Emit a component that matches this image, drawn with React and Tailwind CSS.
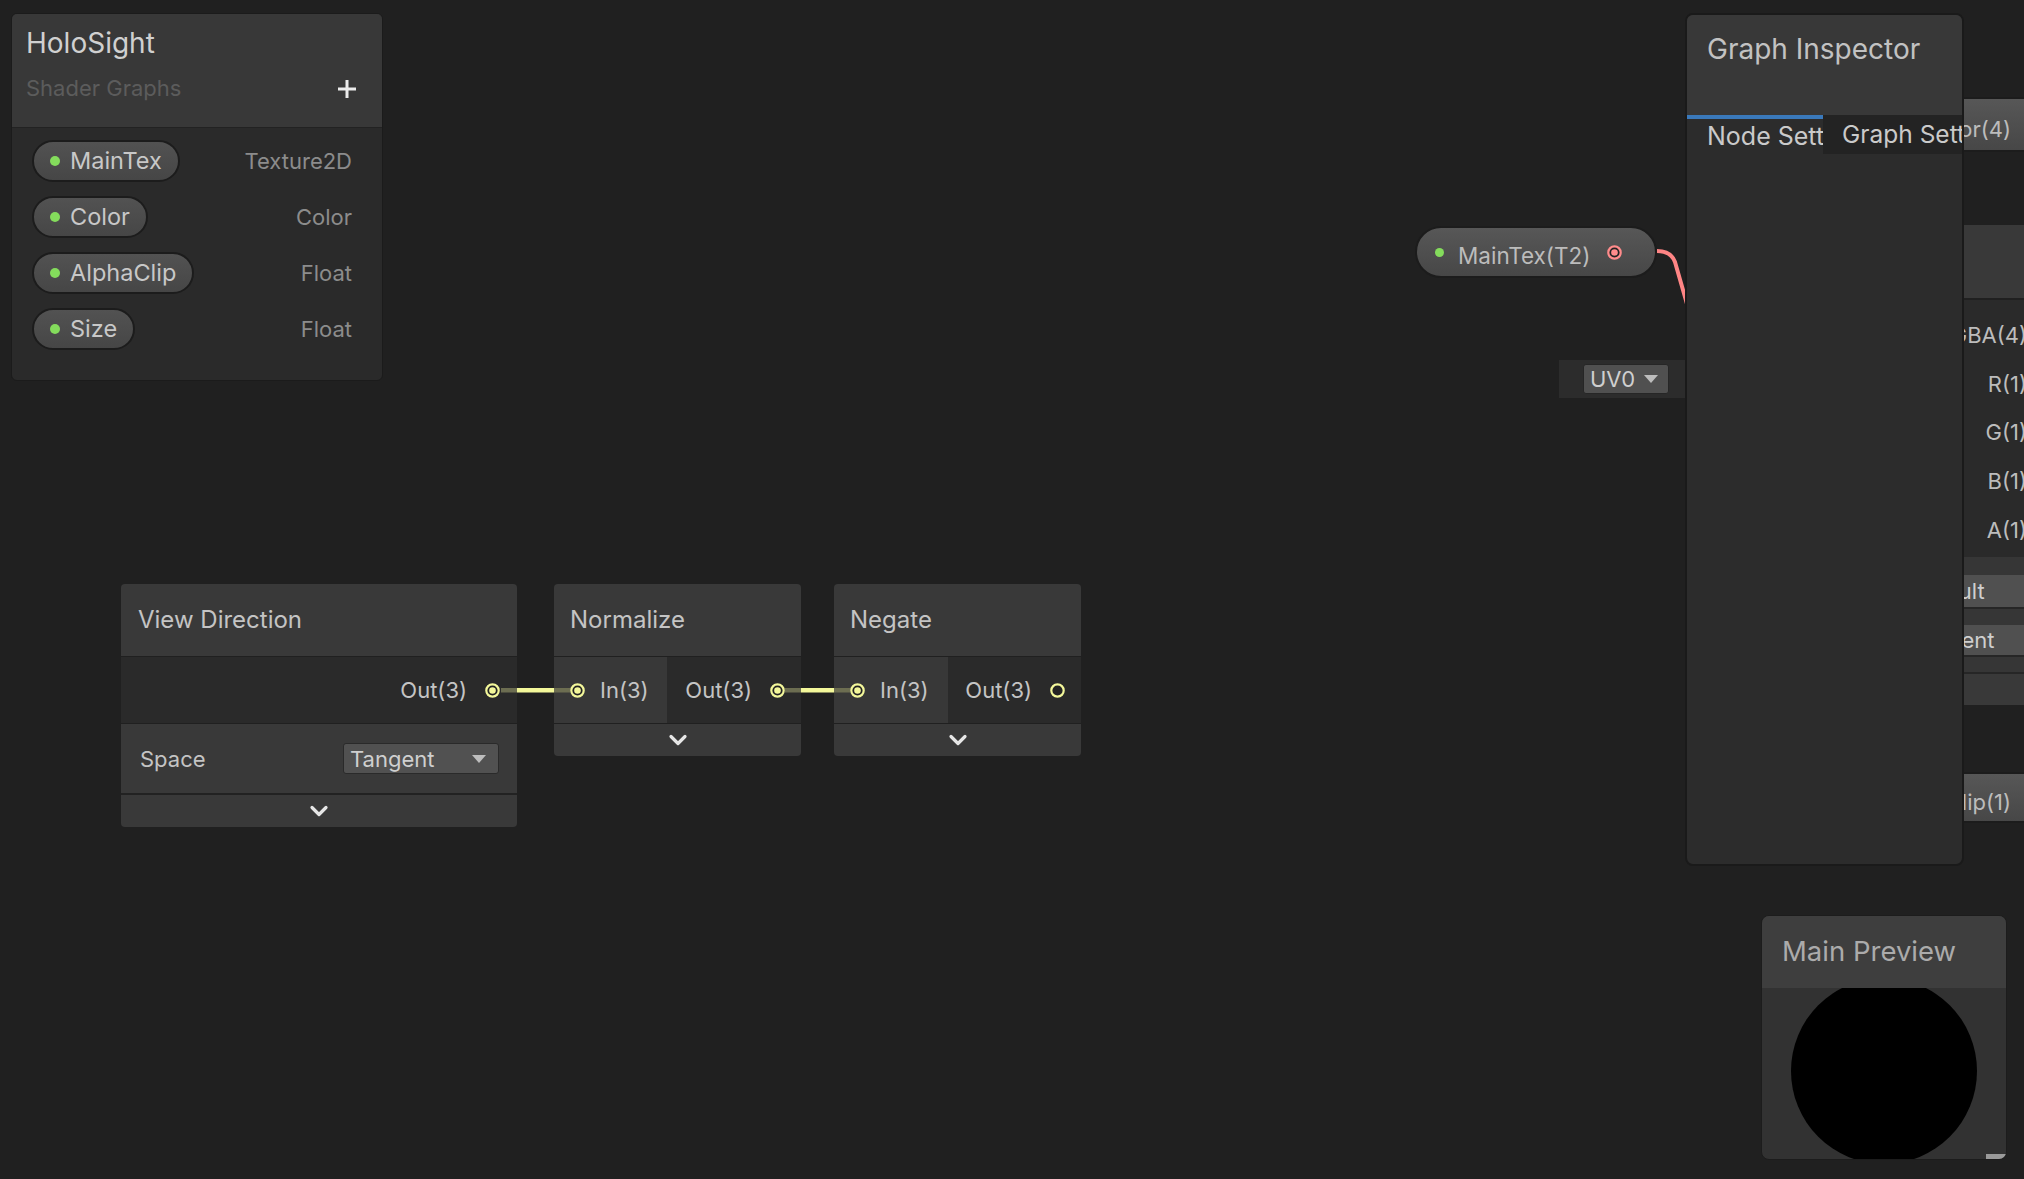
import React from "react";

const YEL = "#F3F79A";
const DIM = "#6c6d51";

function Port({ color = YEL, filled = true }) {
  return (
    <svg width="15" height="15" viewBox="0 0 15 15" className="shrink-0">
      <circle cx="7.5" cy="7.5" r="6.2" fill="#232323" stroke={color} strokeWidth="2.2" />
      {filled && <circle cx="7.5" cy="7.5" r="3.3" fill={color} />}
    </svg>
  );
}

function Chevron() {
  return (
    <svg width="20" height="12" viewBox="0 0 20 12" className="shrink-0">
      <path d="M3 2.5 L10 9.5 L17 2.5" fill="none" stroke="#e6e6e6" strokeWidth="3.2" strokeLinecap="round" strokeLinejoin="round" />
    </svg>
  );
}

function DropArrow() {
  return (
    <svg width="14" height="8" viewBox="0 0 14 8" className="shrink-0">
      <path d="M0 0 H14 L7 8 Z" fill="#bdbdbd" />
    </svg>
  );
}

function PlusIcon() {
  return (
    <svg width="20" height="20" viewBox="0 0 20 20" className="shrink-0">
      <path d="M10 1 V19 M1 10 H19" stroke="#ececec" strokeWidth="3" />
    </svg>
  );
}

function BbRow({ name, type }) {
  return (
    <div className="flex items-center justify-between">
      <div className="h-[42px] rounded-full border-2 border-[#1c1c1c] bg-linear-to-b from-[#525252] to-[#464646] flex items-center pl-[16px] pr-[16px] gap-[10px]">
        <span className="w-[10px] h-[10px] rounded-full bg-[#84dc5c]" />
        <span className="text-[23.5px] leading-none text-[#c8c8c8]">{name}</span>
      </div>
      <span className="text-[22px] leading-none text-[#8c8c8c]">{type}</span>
    </div>
  );
}

function Blackboard() {
  return (
    <div className="absolute left-[11px] top-[13px] w-[372px] h-[368px] rounded-[6px] border border-[#1b1b1b] bg-[#2a2a2a] overflow-hidden flex flex-col">
      <div className="h-[114px] shrink-0 bg-[#383838] border-b border-[#222222] pl-[14px] pr-[25px] pt-[15px] flex flex-col">
        <div className="text-[28px] leading-[28px] text-[#d0d0d0]">HoloSight</div>
        <div className="mt-[20px] flex items-center justify-between">
          <span className="text-[22px] leading-[23px] text-[#5c5c5c]">Shader Graphs</span>
          <PlusIcon />
        </div>
      </div>
      <div className="flex flex-col gap-[14px] pt-[12px] pl-[20px] pr-[30px]">
        <BbRow name="MainTex" type="Texture2D" />
        <BbRow name="Color" type="Color" />
        <BbRow name="AlphaClip" type="Float" />
        <BbRow name="Size" type="Float" />
      </div>
    </div>
  );
}

function ViewDirectionNode() {
  return (
    <div className="absolute left-[121px] top-[584px] w-[396px] flex flex-col rounded-[4px] overflow-hidden">
      <div className="h-[72px] bg-[#393939] flex items-center pl-[17px] text-[24px] text-[#c4c4c4]">View Direction</div>
      <div className="h-[1px] bg-[#202020]" />
      <div className="h-[66px] bg-[#2a2a2a] flex items-center justify-end pr-[17px] gap-[18px]">
        <span className="text-[22px] leading-none text-[#c4c4c4]">Out(3)</span>
        <Port />
      </div>
      <div className="h-[1px] bg-[#202020]" />
      <div className="h-[69px] bg-[#393939] flex items-center justify-between pl-[19px] pr-[18px]">
        <span className="text-[22px] leading-none text-[#c4c4c4]">Space</span>
        <div className="w-[156px] h-[31px] rounded-[3px] bg-[#515151] border border-[#2a2a2a] flex items-center justify-between pl-[6px] pr-[12px]">
          <span className="text-[22px] leading-none text-[#cfcfcf]">Tangent</span>
          <DropArrow />
        </div>
      </div>
      <div className="h-[2px] bg-[#222222]" />
      <div className="h-[32px] bg-[#393939] flex items-center justify-center">
        <Chevron />
      </div>
    </div>
  );
}

function SmallNode({ left, title, inWidth, outFilled }) {
  return (
    <div className="absolute top-[584px] w-[247px] flex flex-col rounded-[4px] overflow-hidden" style={{ left }}>
      <div className="h-[72px] bg-[#393939] flex items-center pl-[16px] text-[24px] text-[#c4c4c4]">{title}</div>
      <div className="h-[1px] bg-[#202020]" />
      <div className="h-[66px] flex">
        <div className="h-full bg-[#383838] flex items-center shrink-0 pl-[16px] gap-[15px]" style={{ width: inWidth }}>
          <Port />
          <span className="text-[22px] leading-none text-[#c4c4c4]">In(3)</span>
        </div>
        <div className="h-full flex-1 bg-[#2a2a2a] flex items-center justify-end pr-[16px] gap-[18px]">
          <span className="text-[22px] leading-none text-[#c4c4c4]">Out(3)</span>
          <Port filled={outFilled} />
        </div>
      </div>
      <div className="h-[1px] bg-[#202020]" />
      <div className="h-[32px] bg-[#393939] flex items-center justify-center">
        <Chevron />
      </div>
    </div>
  );
}

function PropPill({ top, height, text }) {
  return (
    <div
      className="absolute left-[1800px] w-[250px] rounded-full border-2 border-[#1c1c1c] bg-linear-to-b from-[#575757] to-[#474747] flex items-center justify-end pr-[37px]"
      style={{ top, height }}
    >
      <span className="pt-[9px] text-[22px] leading-none text-[#bcbcbc]">{text}</span>
    </div>
  );
}

function SampleNode() {
  const outs = ["RGBA(4)", "R(1)", "G(1)", "B(1)", "A(1)"];
  return (
    <div className="absolute left-[1720px] top-[225px] w-[360px] flex flex-col rounded-[4px] overflow-hidden">
      <div className="h-[73px] bg-[#393939] flex items-center pl-[16px] text-[24px] text-[#c4c4c4]">Sample Texture 2D</div>
      <div className="h-[2px] bg-[#202020]" />
      <div className="h-[257px] bg-[#2a2a2a] flex flex-col items-end pr-[53px] pt-[11px]">
        {outs.map((o) => (
          <div key={o} className="h-[48.6px] flex items-center">
            <span className="text-[22px] leading-none text-[#bcbcbc]">{o}</span>
          </div>
        ))}
      </div>
      <div className="bg-[#363636] flex flex-col">
        <div className="h-[18px]" />
        <div className="h-[32px] flex items-center">
          <span className="w-[183px] pl-[16px] text-[22px] leading-none text-[#c4c4c4]">Type</span>
          <div className="h-full flex-1 bg-[#505050] flex items-center pl-[7px] text-[22px] leading-none text-[#cfcfcf]">Default</div>
        </div>
        <div className="h-[2px] bg-[#262626]" />
        <div className="h-[16px]" />
        <div className="h-[30px] flex items-center">
          <span className="w-[183px] pl-[16px] text-[22px] leading-none text-[#c4c4c4]">Space</span>
          <div className="h-full flex-1 bg-[#505050] flex items-center pl-[7px] text-[22px] leading-none text-[#cfcfcf]">Tangent</div>
        </div>
        <div className="h-[2px] bg-[#262626]" />
        <div className="h-[15px]" />
        <div className="h-[2px] bg-[#262626]" />
        <div className="h-[31px] bg-[#393939] flex items-center justify-center">
          <Chevron />
        </div>
      </div>
    </div>
  );
}

function MainTexNode() {
  return (
    <div className="absolute left-[1415px] top-[226px] w-[242px] h-[52px] rounded-full border-2 border-[#1c1c1c] bg-linear-to-b from-[#575757] to-[#474747] flex items-center pl-[18px]">
      <span className="w-[9px] h-[9px] rounded-full bg-[#84dc5c]" />
      <span className="ml-[14px] pt-[8px] text-[22.5px] leading-none text-[#bcbcbc]">MainTex(T2)</span>
      <span className="ml-[17px]">
        <Port color="#ff8b8b" />
      </span>
    </div>
  );
}

function UVBlock() {
  return (
    <div className="absolute left-[1559px] top-[360px] w-[140px] h-[38px] bg-[#2c2c2c] flex items-center pl-[24px]">
      <div className="w-[86px] h-[30px] rounded-[3px] bg-[#505050] border border-[#262626] flex items-center justify-between pl-[6px] pr-[10px]">
        <span className="text-[22px] leading-none text-[#cfcfcf]">UV0</span>
        <DropArrow />
      </div>
    </div>
  );
}

function Edges() {
  return (
    <svg className="absolute left-0 top-0 pointer-events-none" width="2024" height="1179" viewBox="0 0 2024 1179">
      <rect x="501" y="688" width="16" height="4.5" fill={DIM} />
      <rect x="517" y="688" width="37" height="4.5" fill={YEL} />
      <rect x="554" y="688" width="16" height="4.5" fill={DIM} />
      <rect x="785" y="688" width="16" height="4.5" fill={DIM} />
      <rect x="801" y="688" width="33" height="4.5" fill={YEL} />
      <rect x="834" y="688" width="16" height="4.5" fill={DIM} />
      <path d="M1657 251 Q1671 251 1675 262 L1687 304" fill="none" stroke="#ff8585" strokeWidth="4" />
    </svg>
  );
}

function Inspector() {
  return (
    <div className="absolute left-[1685px] top-[13px] w-[279px] h-[853px] rounded-[8px] border-2 border-[#1a1a1a] bg-[#2c2c2c] overflow-hidden flex flex-col">
      <div className="h-[100px] shrink-0 bg-[#383838] pl-[20px] pt-[20px]">
        <div className="text-[28px] leading-[28px] text-[#c2c2c2] whitespace-nowrap">Graph Inspector</div>
      </div>
      <div className="h-[39px] shrink-0 flex">
        <div className="w-[136px] h-full border-t-4 border-[#3a79bb] bg-[#2c2c2c] flex items-center pl-[20px] overflow-hidden">
          <span className="text-[25px] leading-none text-[#cacaca] whitespace-nowrap">Node Settings</span>
        </div>
        <div className="flex-1 h-full bg-[#232323] flex items-center pl-[19px] overflow-hidden">
          <span className="text-[24.5px] leading-none text-[#cacaca] whitespace-nowrap">Graph Settings</span>
        </div>
      </div>
      <div className="flex-1" />
    </div>
  );
}

function MainPreview() {
  return (
    <div className="absolute left-[1761px] top-[915px] w-[246px] h-[245px] rounded-[8px] border border-[#1c1c1c] bg-[#323232] overflow-hidden flex flex-col">
      <div className="h-[72px] shrink-0 bg-[#3e3e3e] flex items-center pl-[20px]">
        <span className="text-[27.5px] leading-none text-[#ababab] whitespace-nowrap">Main Preview</span>
      </div>
      <div className="relative flex-1 overflow-hidden">
        <div className="absolute left-[29px] top-[-10px] w-[186px] h-[186px] rounded-full bg-black" />
        <div className="absolute right-0 bottom-0 w-[20px] h-[5px] bg-[#9a9a9a]" />
      </div>
    </div>
  );
}

export default function App() {
  return (
    <div className="relative w-[2024px] h-[1179px] overflow-hidden bg-[#202020] font-['Inter','Noto_Sans',sans-serif]">
      <PropPill top={97} height={55} text="Color(4)" />
      <SampleNode />
      <PropPill top={772} height={51} text="AlphaClip(1)" />
      <MainTexNode />
      <UVBlock />
      <ViewDirectionNode />
      <SmallNode left={554} title="Normalize" inWidth={113} outFilled={true} />
      <SmallNode left={834} title="Negate" inWidth={114} outFilled={false} />
      <Edges />
      <Blackboard />
      <Inspector />
      <MainPreview />
    </div>
  );
}
